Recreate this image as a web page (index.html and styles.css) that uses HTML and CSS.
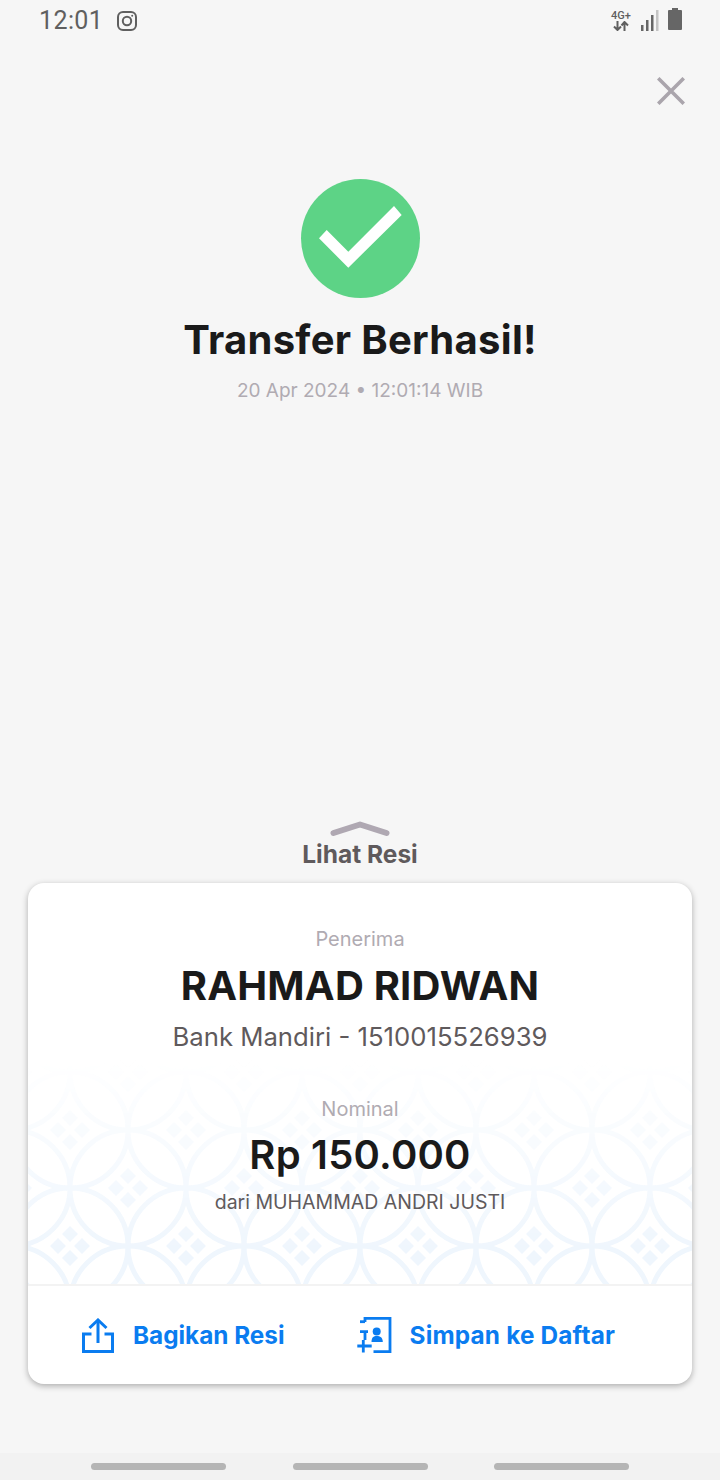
FILE: index.html
```html
<!DOCTYPE html>
<html lang="en">
<head>
    <meta charset="UTF-8">
    <meta name="viewport" content="width=device-width, initial-scale=1.0">
    <title>Transfer Berhasil</title>
    <link rel="stylesheet" href="styles.css">
</head>
<body>
    <div class="screen">
        <div class="status-bar">
            <div class="status-left">
                <span class="clock">12:01</span>
                <svg class="ig-icon" width="20" height="20" viewBox="0 0 20 20" fill="none" stroke="#5f5f5f" stroke-width="2">
                    <rect x="1" y="1" width="18" height="18" rx="5"/>
                    <circle cx="10" cy="10" r="4.2"/>
                    <circle cx="15.2" cy="4.8" r="1" fill="#5f5f5f" stroke="none"/>
                </svg>
            </div>
            <div class="status-right">
                <div class="network">
                    <span class="network-label">4G+</span>
                    <svg width="16" height="10" viewBox="0 0 16 10" fill="none" stroke="#5f5f5f" stroke-width="2">
                        <path d="M4.5 0V8.5M1 5.5L4.5 9L8 5.5"/>
                        <path d="M11.5 10V1.5M8.5 4.5L11.5 1L15 4.5"/>
                    </svg>
                </div>
                <svg class="signal" width="18" height="21" viewBox="0 0 18 21">
                    <rect x="0" y="15" width="2.5" height="6" fill="#666"/>
                    <rect x="5" y="10" width="2.5" height="11" fill="#666"/>
                    <rect x="10" y="5" width="2.5" height="16" fill="#666"/>
                    <rect x="15" y="0" width="2.5" height="21" fill="#c4c4c4"/>
                </svg>
                <svg class="battery" width="14" height="22" viewBox="0 0 14 22">
                    <path d="M4 0H10V2H13Q14 2 14 3V21Q14 22 13 22H1Q0 22 0 21V3Q0 2 1 2H4Z" fill="#666"/>
                </svg>
            </div>
        </div>

        <div class="close-row">
            <svg width="28" height="28" viewBox="0 0 28 28" stroke="#aaa5ac" stroke-width="3.6" stroke-linecap="square">
                <path d="M2.5 2.5L25.5 25.5M25.5 2.5L2.5 25.5"/>
            </svg>
        </div>

        <div class="result">
            <svg class="check-badge" width="119" height="119" viewBox="0 0 119 119">
                <circle cx="59.5" cy="59.5" r="59.5" fill="#5dd386"/>
                <polygon points="18,59.3 25.7,51 47.3,72.7 93,27 100.7,36 47.3,88.7" fill="#fff"/>
            </svg>
            <h1 class="result-title">Transfer Berhasil!</h1>
            <p class="result-date">20 Apr 2024 • 12:01:14 WIB</p>
        </div>

        <div class="receipt-toggle">
            <svg width="60" height="16" viewBox="0 0 60 16" fill="none" stroke="#afa8b2" stroke-width="6" stroke-linecap="round" stroke-linejoin="round">
                <path d="M3.5 12L30 3.5L56.5 12"/>
            </svg>
            <span class="toggle-label">Lihat Resi</span>
        </div>

        <div class="card">
            <div class="card-body">
                <svg class="batik" width="664" height="224" xmlns="http://www.w3.org/2000/svg">
                    <defs>
                        <pattern id="shippo" x="42" y="70" width="116" height="116" patternUnits="userSpaceOnUse">
                            <g fill="none" stroke="#eff6fd" stroke-width="5">
                                <circle cx="0" cy="0" r="58"/>
                                <circle cx="116" cy="0" r="58"/>
                                <circle cx="0" cy="116" r="58"/>
                                <circle cx="116" cy="116" r="58"/>
                                <circle cx="58" cy="58" r="58"/>
                            </g>
                            <g fill="#eff6fd">
                                <path d="M58 38l8 8-8 8-8-8zM58 62l8 8-8 8-8-8zM46 50l8 8-8 8-8-8zM70 50l8 8-8 8-8-8z"/>
                                <path d="M0 -20l8 8-8 8-8-8zM0 4l8 8-8 8-8-8zM-12 -8l8 8-8 8-8-8zM12 -8l8 8-8 8-8-8z"/>
                                <path d="M116 -20l8 8-8 8-8-8zM116 4l8 8-8 8-8-8zM104 -8l8 8-8 8-8-8zM128 -8l8 8-8 8-8-8z"/>
                                <path d="M0 96l8 8-8 8-8-8zM0 120l8 8-8 8-8-8zM-12 108l8 8-8 8-8-8zM12 108l8 8-8 8-8-8z"/>
                                <path d="M116 96l8 8-8 8-8-8zM116 120l8 8-8 8-8-8zM104 108l8 8-8 8-8-8zM128 108l8 8-8 8-8-8z"/>
                            </g>
                        </pattern>
                    </defs>
                    <rect width="664" height="224" fill="url(#shippo)"/>
                </svg>
                <div class="card-text">
                    <span class="field-label">Penerima</span>
                    <span class="recipient-name">RAHMAD RIDWAN</span>
                    <span class="recipient-bank">Bank Mandiri - 1510015526939</span>
                    <span class="field-label nominal-label">Nominal</span>
                    <span class="amount">Rp 150.000</span>
                    <span class="sender">dari MUHAMMAD ANDRI JUSTI</span>
                </div>
            </div>
            <div class="card-actions">
                <a class="action share-action">
                    <svg width="32" height="35" viewBox="0 0 32 35" fill="none" stroke="#0a7cf0" stroke-width="3">
                        <path d="M9.5 16H1.5V33.5H30.5V16H22.5"/>
                        <path d="M16 25V3"/>
                        <path d="M7.5 10L16 2L24.5 10"/>
                    </svg>
                    <span>Bagikan Resi</span>
                </a>
                <a class="action save-action">
                    <svg width="35" height="36" viewBox="0 0 35 36" fill="none" stroke="#0a7cf0" stroke-width="2.8">
                        <path d="M8 5V1.4H33V34.7H16.5"/>
                        <path d="M3 4.7H8"/>
                        <path d="M3 14.7H11M8 14.7V23"/>
                        <path d="M6.3 23V35.5M0.3 29H14.7"/>
                        <circle cx="19.7" cy="14.5" r="4" fill="#0a7cf0" stroke="none"/>
                        <path d="M14.5 25C14.5 20.5 16.5 19 19.7 19C23 19 25.8 20.5 25.8 25Z" fill="#0a7cf0" stroke="none"/>
                    </svg>
                    <span>Simpan ke Daftar</span>
                </a>
            </div>
        </div>

        <div class="nav-bar">
            <span class="nav-pill"></span>
            <span class="nav-pill"></span>
            <span class="nav-pill"></span>
        </div>
    </div>
</body>
</html>
```

FILE: styles.css
```css
* {
    box-sizing: border-box;
}

body {
    margin: 0;
    padding: 0;
    background-color: #f6f6f6;
    font-family: Inter, "Liberation Sans", sans-serif;
    color: #1a1a1a;
}

.screen {
    width: 720px;
    height: 1480px;
    display: flex;
    flex-direction: column;
    overflow: hidden;
}

.status-bar {
    height: 42px;
    padding: 8px 38px 0 39px;
    display: flex;
    justify-content: space-between;
    align-items: flex-start;
}

.status-left {
    display: flex;
    align-items: center;
    gap: 14px;
}

.clock {
    font-family: Roboto, sans-serif;
    font-size: 25px;
    line-height: 26px;
    letter-spacing: 0.4px;
    color: #5f5f5f;
}

.status-right {
    display: flex;
    align-items: flex-start;
    gap: 9px;
}

.network {
    width: 22px;
    display: flex;
    flex-direction: column;
    align-items: center;
    margin-top: 2px;
}

.network-label {
    font-family: Roboto, sans-serif;
    font-size: 11px;
    font-weight: 500;
    line-height: 11px;
    color: #5f5f5f;
}

.signal {
    margin-top: 2px;
}

.close-row {
    display: flex;
    justify-content: flex-end;
    padding-right: 35px;
    margin-top: 35px;
}

.result {
    margin-top: 74px;
    display: flex;
    flex-direction: column;
    align-items: center;
}

.check-badge {
    display: block;
}

.result-title {
    margin: 18px 0 0;
    font-size: 40px;
    line-height: 48px;
    font-weight: 700;
    letter-spacing: 0.3px;
    text-align: center;
}

.result-date {
    margin: 15px 0 0;
    font-size: 19px;
    line-height: 24px;
    color: #b0abb2;
}

.receipt-toggle {
    margin-top: auto;
    display: flex;
    flex-direction: column;
    align-items: center;
    margin-bottom: 14px;
}

.receipt-toggle svg {
    margin-bottom: 2px;
    margin-top: -1px;
}

.toggle-label {
    font-size: 24.5px;
    line-height: 30px;
    font-weight: 700;
    color: #5f5a5c;
}

.card {
    margin: 0 28px;
    height: 501px;
    flex-shrink: 0;
    background-color: #fff;
    border-radius: 16px;
    box-shadow: 0 2px 6px rgba(0, 0, 0, 0.3);
    overflow: hidden;
    display: flex;
    flex-direction: column;
}

.card-body {
    position: relative;
    height: 401px;
    padding-top: 43px;
}

.batik {
    position: absolute;
    left: 0;
    bottom: 0;
    -webkit-mask-image: linear-gradient(to bottom, rgba(0, 0, 0, 0), #000 85%);
    mask-image: linear-gradient(to bottom, rgba(0, 0, 0, 0), #000 85%);
}

.card-text {
    position: relative;
    display: flex;
    flex-direction: column;
    align-items: center;
}

.field-label {
    font-size: 20px;
    line-height: 26px;
    color: #b0abb2;
}

.recipient-name {
    margin-top: 10px;
    font-size: 40px;
    line-height: 48px;
    font-weight: 700;
    letter-spacing: 0.2px;
}

.recipient-bank {
    margin-top: 10px;
    font-size: 25.7px;
    line-height: 34px;
    color: #5f5a5c;
}

.nominal-label {
    margin-top: 42px;
}

.amount {
    margin-top: 9px;
    font-size: 40px;
    line-height: 48px;
    font-weight: 600;
    letter-spacing: 0.2px;
}

.sender {
    margin-top: 10px;
    font-size: 19.5px;
    line-height: 26px;
    color: #5f5a5c;
}

.card-actions {
    flex: 1;
    border-top: 2px solid #f3f3f3;
    display: flex;
    align-items: center;
    padding-left: 54px;
    gap: 72px;
}

.action {
    display: flex;
    align-items: center;
    font-size: 24.3px;
    font-weight: 700;
    color: #0a7cf0;
}

.share-action {
    gap: 19px;
}

.save-action {
    gap: 18px;
    letter-spacing: 0.2px;
}

.nav-bar {
    margin-top: 69px;
    height: 27px;
    background-color: #f2f2f2;
    display: flex;
    justify-content: space-between;
    padding: 10px 91px 0;
}

.nav-pill {
    width: 135px;
    height: 7px;
    border-radius: 4px;
    background-color: #b5b5b5;
}
```
